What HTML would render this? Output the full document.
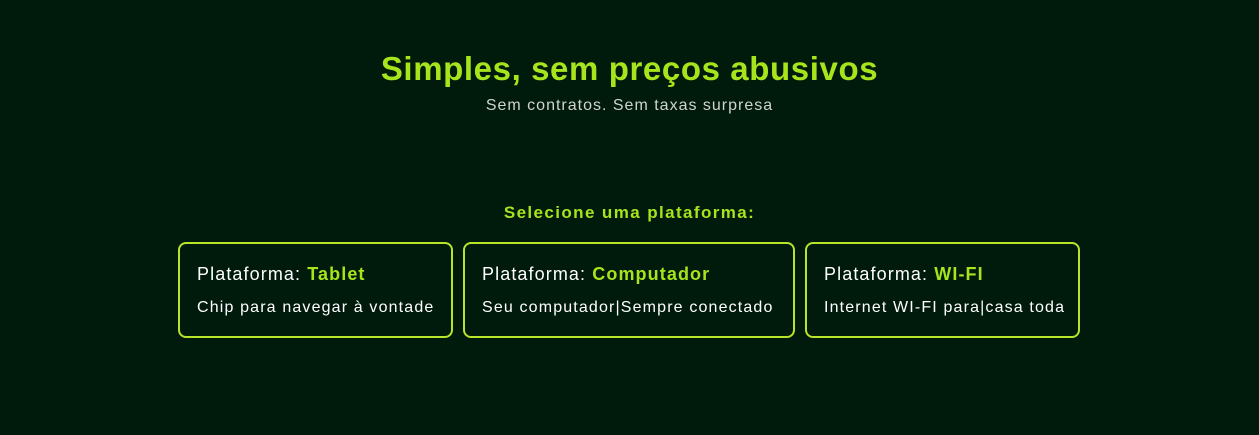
<!DOCTYPE html>
<html><head><meta charset="utf-8"><style>
body{margin:0;width:1259px;height:435px;background:#001a0c;font-family:"Liberation Sans",sans-serif;position:relative;overflow:hidden}
.t{position:absolute;left:0;width:1259px;text-align:center}
h1{margin:0;top:50px;font-size:33px;font-weight:bold;color:#a6e51c;letter-spacing:0.6px}
.sub{top:97px;font-size:16px;color:#d0d4cf;letter-spacing:1px}
.sel{top:203px;font-size:17px;font-weight:bold;color:#a6e51c;letter-spacing:1.4px}
.card{position:absolute;top:242px;height:92px;border:2px solid #b8e42a;border-radius:8px;box-sizing:content-box}
.card .a{position:absolute;left:17px;top:20px;font-size:18px;color:#fff;white-space:nowrap;letter-spacing:1.1px}
.card .a b{color:#a6e51c}
.card .b{position:absolute;left:17px;top:55px;font-size:16px;color:#fff;white-space:nowrap;letter-spacing:1.15px}
</style></head><body>
<h1 class="t">Simples, sem preços abusivos</h1>
<div class="t sub">Sem contratos. Sem taxas surpresa</div>
<div class="t sel">Selecione uma plataforma:</div>
<div class="card" style="left:178px;width:271px"><div class="a">Plataforma: <b>Tablet</b></div><div class="b">Chip para navegar à vontade</div></div>
<div class="card" style="left:463px;width:328px"><div class="a">Plataforma: <b>Computador</b></div><div class="b">Seu computador|Sempre conectado</div></div>
<div class="card" style="left:805px;width:271px"><div class="a">Plataforma: <b>WI-FI</b></div><div class="b">Internet WI-FI para|casa toda</div></div>
</body></html>
